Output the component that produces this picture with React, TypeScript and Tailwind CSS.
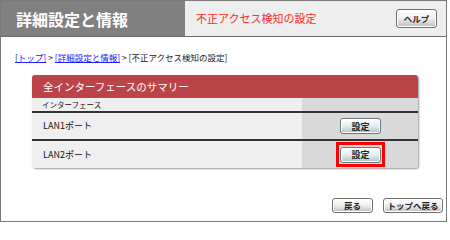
const jp = { fontFamily: '"Noto Sans CJK JP", "Noto Sans", sans-serif' };

function GrayButton({ label, w }: { label: string; w: string }) {
  return (
    <button
      className={`${w} h-[15px] rounded-[3px] border border-[#707070] bg-gradient-to-b from-[#ffffff] via-[#eeeeee] to-[#bdbdbd] shadow-[inset_0_0_0_1px_#ffffff] text-[8.5px] font-bold leading-none text-[#222] flex items-center justify-center`}
    >
      {label}
    </button>
  );
}

function SetButton() {
  return (
    <button className="w-[41px] h-[16px] rounded-[3px] border border-[#6a7a7a] bg-gradient-to-b from-[#ffffff] via-[#e4eeee] to-[#a9c4c2] shadow-[inset_0_0_0_1px_#ffffff] text-[9px] font-bold leading-none text-[#222] flex items-center justify-center">
      設定
    </button>
  );
}

export default function App() {
  return (
    <div className="w-[450px] h-[225px] bg-white" style={jp}>
      <div className="w-[447px] h-[222px] border border-[#7a7a7a] flex flex-col">
        {/* header */}
        <div className="flex h-[36px] border-b border-[#6e6e6e] shrink-0">
          <div className="w-[184px] bg-[#808080] flex items-center pl-[15px] text-white font-bold text-[16px]">
            詳細設定と情報
          </div>
          <div className="flex-1 bg-[#eeeeee] flex items-center justify-between pl-[11px] pr-[9px]">
            <span className="text-[11px] text-[#ff2a2a]">不正アクセス検知の設定</span>
            <button className="w-[41px] h-[19px] rounded-[3px] border border-[#707070] bg-gradient-to-b from-[#ffffff] via-[#eeeeee] to-[#bcbcbc] shadow-[inset_0_0_0_1px_#ffffff] text-[8.5px] font-bold leading-none text-[#222] flex items-center justify-center">
              ヘルプ
            </button>
          </div>
        </div>

        {/* breadcrumb */}
        <div className="mt-[15px] pl-[14px] text-[8.5px] leading-[10px] text-[#222] whitespace-nowrap">
          <span className="text-[#2020ff] underline">[トップ]</span>
          <span> &gt; </span>
          <span className="text-[#2020ff] underline">[詳細設定と情報]</span>
          <span> &gt; [不正アクセス検知の設定]</span>
        </div>

        {/* panel */}
        <div className="ml-[31px] mt-[13px] w-[386px] rounded-[3px] overflow-hidden shadow-[1px_1px_2px_#9a9a9a] bg-[#efefef]">
          <div className="h-[23px] bg-[#bb4448] flex items-center pl-[11px] text-white text-[10.5px]">
            全インターフェースのサマリー
          </div>
          <div className="flex h-[15px] border-b-2 border-[#333]">
            <div className="w-[270px] bg-[#efefef] flex items-center pl-[10px] text-[7.5px] text-[#111]">
              インターフェース
            </div>
            <div className="flex-1 bg-[#d9d9d9]" />
          </div>
          <div className="flex h-[28px] border-b-2 border-[#333]">
            <div className="w-[270px] bg-[#efefef] flex items-center pl-[11px] text-[9px] text-[#111]">
              LAN1ポート
            </div>
            <div className="flex-1 bg-[#d9d9d9] flex items-center pl-[38px]">
              <SetButton />
            </div>
          </div>
          <div className="flex h-[27px]">
            <div className="w-[270px] bg-[#efefef] flex items-center pl-[11px] text-[9px] text-[#111]">
              LAN2ポート
            </div>
            <div className="flex-1 bg-[#d9d9d9] flex items-center pl-[34px]">
              <div className="w-[49px] h-[25px] border-[3px] border-[#ff0000] flex items-center justify-center">
                <SetButton />
              </div>
            </div>
          </div>
        </div>

        {/* footer buttons */}
        <div className="mt-[30px] flex justify-end gap-[10px] pr-[3px]">
          <GrayButton label="戻る" w="w-[41px]" />
          <GrayButton label="トップへ戻る" w="w-[60px]" />
        </div>
      </div>
    </div>
  );
}
